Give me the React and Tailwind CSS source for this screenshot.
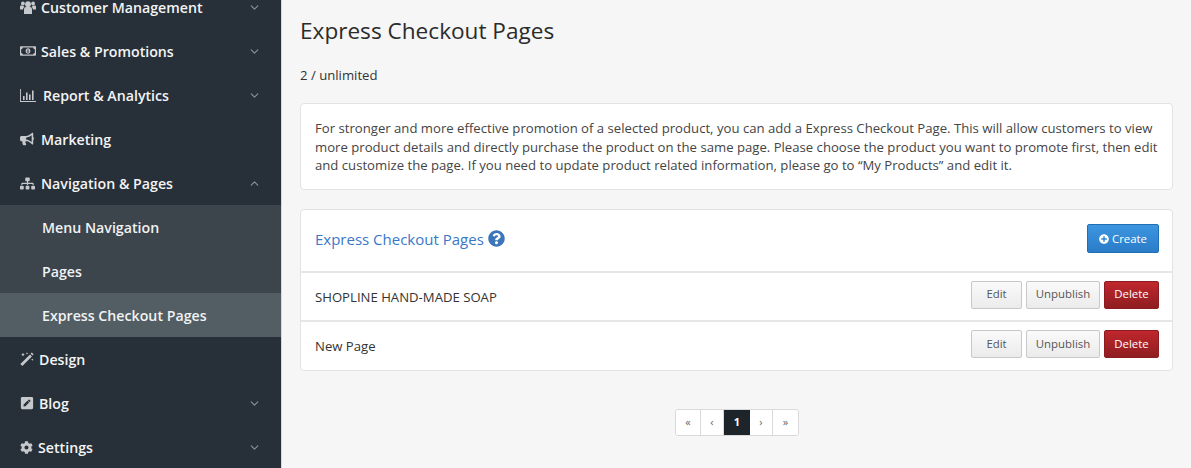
import { FaRegMoneyBillAlt, FaBullhorn, FaSitemap, FaPenSquare, FaCog, FaQuestionCircle, FaPlusCircle } from "react-icons/fa";
import { FiChevronDown, FiChevronUp } from "react-icons/fi";

// old font-awesome style users glyph
const UsersIcon = ({ className }) => (
  <svg viewBox="0 0 16 14" fill="currentColor" className={className}>
    <circle cx="8" cy="4.2" r="2.9" />
    <circle cx="2.9" cy="3.4" r="1.9" />
    <circle cx="13.1" cy="3.4" r="1.9" />
    <path d="M4 9.5C4 7.8 5 7 6 7h4c1 0 2 .8 2 2.5V14H4z" />
    <path d="M0 6.8C0 6 .6 5.6 1.3 5.6h2c.3.8.8 1.3 1.2 1.5-1 .5-1.4 1.4-1.4 2.5H0zM16 6.8c0-.8-.6-1.2-1.3-1.2h-2c-.3.8-.8 1.3-1.2 1.5 1 .5 1.4 1.4 1.4 2.5H16z" />
  </svg>
);

const ChartIcon = ({ className }) => (
  <svg viewBox="0 0 16 14" fill="currentColor" className={className}>
    <path d="M0 1h.9v11.9H16v1H0z" />
    <path d="M3 8h1.6v4H3zM6 4.5h1.6V12H6zM9 6.5h1.6V12H9zM12 2.5h1.6V12H12z" />
  </svg>
);

const WandIcon = ({ className }) => (
  <svg viewBox="0 0 14 14" fill="currentColor" className={className}>
    <path d="M10 2.600l1.900 1.900L2.300 14 .4 12.100z" />
    <path d="M3 .8l.6 1.200 1.200.6-1.200.6-.6 1.200-.6-1.200-1.200-.6 1.200-.6zM12.300 6.500l.4.8.8.4-.8.4-.4.8-.4-.8-.8-.4.8-.4zM7 .3l.4.7.7.4-.7.4L7 2.500l-.4-.7-.7-.4.7-.4z" />
    <path d="M11.800 .4l1.800 1.800-1.200 1.200-1.800-1.800z" />
  </svg>
);

const NavItem = ({ icon: Icon, label, iconClass, gapClass, chevron }) => (
  <div className="flex h-11 items-center pl-5 pr-5 text-[#f3f4f5]">
    <Icon className={`shrink-0 text-[#c6c9cc] ${iconClass}`} />
    <span className={`pt-[1px] text-[14.2px] font-semibold ${gapClass}`}>{label}</span>
    {chevron === "down" && <FiChevronDown className="ml-auto text-[13px] text-[#8d949a]" />}
    {chevron === "up" && <FiChevronUp className="ml-auto text-[13px] text-[#8d949a]" />}
  </div>
);

const SubItem = ({ label, active }) => (
  <div className={`flex h-11 items-center pl-[42px] pt-[1px] text-[14.2px] font-semibold text-[#f0f2f3] ${active ? "bg-[#525e64]" : ""}`}>
    {label}
  </div>
);

const Row = ({ name }) => (
  <div className="flex h-[49px] items-center justify-between border-b-2 border-[#e6e6e6] pl-[14px] pr-[13px] last:h-[48px] last:border-b-0">
    <span className="pt-[3px] text-[13.15px] text-[#333]">{name}</span>
    <div className="mb-[3px] flex gap-[4px]">
      <button className="h-[28px] w-[51px] rounded-[2px] border border-[#c8c8c8] bg-gradient-to-b from-[#fafafa] to-[#ebebeb] pb-[2px] text-[11.4px] text-[#555]">Edit</button>
      <button className="h-[28px] w-[74px] rounded-[2px] border border-[#c8c8c8] bg-gradient-to-b from-[#fafafa] to-[#ebebeb] pb-[2px] text-[11.4px] text-[#555]">Unpublish</button>
      <button className="h-[28px] w-[55px] rounded-[2px] border border-[#8c1c20] bg-gradient-to-b from-[#c0272d] to-[#8f1d21] pb-[2px] text-[11.4px] text-white">Delete</button>
    </div>
  </div>
);

const PageCell = ({ children, active, className }) => (
  <div className={`flex h-full items-center justify-center text-[11px] ${active ? "bg-[#1d252b] font-bold text-white" : "border-r border-[#d9d9d9] bg-white text-[#666]"} ${className}`}>
    {children}
  </div>
);

export default function App() {
  return (
    <div className="flex h-[468px] overflow-hidden bg-[#f6f6f6] font-['Open_Sans',sans-serif]">
      <aside className="w-[282px] shrink-0 border-r border-[#d8d8d8] bg-[#272f38]">
        <div className="-mt-[15px]">
          <NavItem icon={UsersIcon} label="Customer Management" iconClass="h-[14px] w-4" gapClass="ml-[5px]" chevron="down" />
          <NavItem icon={FaRegMoneyBillAlt} label="Sales & Promotions" iconClass="text-[16px]" gapClass="ml-[5px]" chevron="down" />
          <NavItem icon={ChartIcon} label="Report & Analytics" iconClass="h-[14px] w-4" gapClass="ml-[7px]" chevron="down" />
          <NavItem icon={FaBullhorn} label="Marketing" iconClass="text-[14px]" gapClass="ml-[7px]" />
          <NavItem icon={FaSitemap} label="Navigation & Pages" iconClass="text-[15px]" gapClass="ml-[6px]" chevron="up" />
          <div className="bg-[#3c444c]">
            <SubItem label="Menu Navigation" />
            <SubItem label="Pages" />
            <SubItem label="Express Checkout Pages" active />
          </div>
          <NavItem icon={WandIcon} label="Design" iconClass="h-[14px] w-[14px]" gapClass="ml-[5px]" />
          <NavItem icon={FaPenSquare} label="Blog" iconClass="text-[14px]" gapClass="ml-[5px]" chevron="down" />
          <NavItem icon={FaCog} label="Settings" iconClass="text-[13px]" gapClass="ml-[5px]" chevron="down" />
        </div>
      </aside>

      <main className="min-w-0 flex-1 pl-[18px] pr-[18px]">
        <h1 className="mt-[16px] text-[22.6px] leading-[30px] text-[#2b2b2b]">Express Checkout Pages</h1>
        <p className="mt-[20px] text-[13.15px] leading-[18px] text-[#333]">2 / unlimited</p>
        <div className="mt-[19px] rounded-[4px] border border-[#e3e3e3] bg-white pb-[14.3px] pl-[14px] pr-[10px] pt-[15px] text-[13.15px] leading-[18.5px] text-[#444]">
          For stronger and more effective promotion of a selected product, you can add a Express Checkout Page. This will allow customers to view more product details and directly purchase the product on the same page. Please choose the product you want to promote first, then edit and customize the page. If you need to update product related information, please go to “My Products” and edit it.
        </div>
        <div className="mt-[19px] rounded-[4px] border border-[#e3e3e3] bg-white">
          <div className="flex h-[63px] items-center justify-between border-b-2 border-[#e6e6e6] pb-[3px] pl-[14px] pr-[13px]">
            <div className="flex items-center gap-[4px] text-[15px] text-[#3a78c9]">
              Express Checkout Pages
              <FaQuestionCircle className="text-[17px] text-[#3d76b8]" />
            </div>
            <button className="flex h-[29px] w-[72px] items-center justify-center gap-[3px] rounded-[2px] border border-[#1f6fb5] bg-gradient-to-b from-[#3d96e0] to-[#2a7cc7] text-[11.4px] text-white">
              <FaPlusCircle className="text-[10px]" />
              Create
            </button>
          </div>
          <Row name="SHOPLINE HAND-MADE SOAP" />
          <Row name="New Page" />
        </div>
        <div className="mt-[38px] flex justify-center pl-[1px]">
          <div className="flex h-[27px] w-[124px] overflow-hidden rounded-[3px] border border-[#d9d9d9]">
            <PageCell className="w-[25px]">«</PageCell>
            <PageCell className="w-[23px]">‹</PageCell>
            <PageCell active className="w-[26px]">1</PageCell>
            <PageCell className="w-[23px]">›</PageCell>
            <PageCell className="flex-1 border-r-0">»</PageCell>
          </div>
        </div>
      </main>
    </div>
  );
}
